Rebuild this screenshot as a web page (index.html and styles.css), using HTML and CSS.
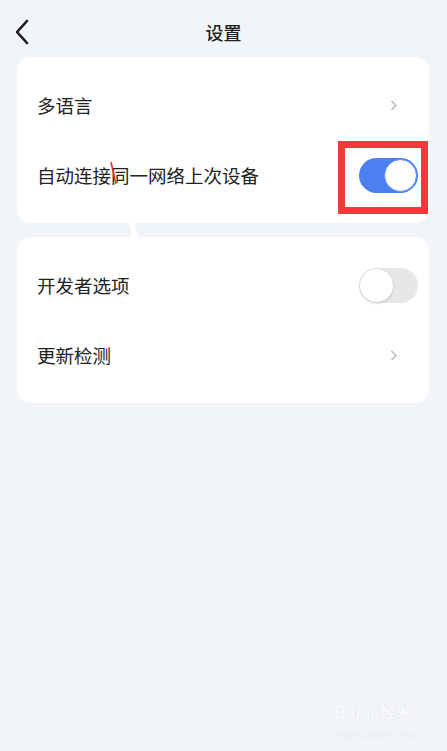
FILE: index.html
```html
<!DOCTYPE html>
<html lang="zh">
<head>
<meta charset="utf-8">
<link rel="stylesheet" href="styles.css">
</head>
<body>
<div class="page">
  <header class="header">
    <div class="back">
      <svg width="16" height="26" viewBox="0 0 16 26"><path d="M13 2 L3 13 L13 24" fill="none" stroke="#1a1a1a" stroke-width="2.6" stroke-linecap="round" stroke-linejoin="round"/></svg>
    </div>
    <div class="title">设置</div>
    <div></div>
  </header>

  <section class="card">
    <div class="row">
      <span class="label">多语言</span>
      <svg class="chev" width="8" height="11" viewBox="0 0 8 11"><path d="M1.5 1 L6 5.5 L1.5 10" fill="none" stroke="#b4b4b4" stroke-width="1.3"/></svg>
    </div>
    <div class="row">
      <span class="label">自动连接同一网络上次设备</span>
      <div class="toggle-wrap">
        <div class="toggle on"><span class="knob"></span></div>
        <div class="redbox"></div>
      </div>
    </div>
  </section>

  <section class="card">
    <div class="row">
      <span class="label">开发者选项</span>
      <div class="toggle-wrap">
        <div class="toggle off"><span class="knob"></span></div>
      </div>
    </div>
    <div class="row">
      <span class="label">更新检测</span>
      <svg class="chev" width="8" height="11" viewBox="0 0 8 11"><path d="M1.5 1 L6 5.5 L1.5 10" fill="none" stroke="#b4b4b4" stroke-width="1.3"/></svg>
    </div>
  </section>

  <svg class="mark" width="447" height="260" viewBox="0 0 447 260">
    <line x1="111" y1="162" x2="116" y2="184" stroke="#e8343a" stroke-width="1.6"/>
    <polygon points="121,188 125,188 139,238 132,238" fill="#ffffff"/>
  </svg>

  <div class="watermark">
    <div class="wm-top"><span>Bai</span><span class="paw">du</span><span>经验</span></div>
    <div class="wm-bottom">jingyan.baidu.com</div>
  </div>
</div>
</body>
</html>
```

FILE: styles.css
```css
* { box-sizing: border-box; }
html, body {
  margin: 0;
  padding: 0;
  background: #f1f4f8;
}
body {
  font-family: "Noto Sans CJK SC", "Noto Sans", sans-serif;
  color: #1f1f1f;
}
.page {
  position: relative;
  width: 447px;
  height: 751px;
  overflow: hidden;
}
.header {
  display: grid;
  grid-template-columns: 1fr auto 1fr;
  align-items: center;
  height: 50px;
  margin-top: 7px;
  padding: 0 14px;
}
.back {
  display: flex;
  align-items: center;
  margin-top: -1px;
}
.back svg { display: block; }
.title {
  font-size: 18px;
  font-weight: 500;
  line-height: 24px;
  color: #1f1f1f;
}
.card {
  margin: 0 18px 14px 17px;
  background: #ffffff;
  border-radius: 14px;
  padding: 14px 0 12px;
}
.row {
  display: flex;
  align-items: center;
  justify-content: space-between;
  height: 70px;
  padding: 0 11px 0 20px;
}
.label {
  font-size: 18.5px;
  line-height: 24px;
  color: #222222;
  margin-top: -2px;
}
.chev {
  display: block;
  margin-right: 20px;
  margin-top: -2px;
}
.toggle-wrap {
  position: relative;
  margin-top: -2px;
}
.toggle {
  position: relative;
  width: 59px;
  height: 35px;
  border-radius: 18px;
}
.toggle.on { background: #4d7ff0; }
.toggle.off { background: #e7e7e7; }
.knob {
  position: absolute;
  top: 1px;
  width: 33px;
  height: 33px;
  border-radius: 50%;
  background: #ffffff;
}
.toggle.on .knob {
  right: 1px;
  border: 1.5px solid #5a88f2;
}
.toggle.off .knob {
  left: 1px;
  box-shadow: 0 1px 3px rgba(0,0,0,0.18);
}
.redbox {
  position: absolute;
  left: -21px;
  top: -17px;
  width: 90px;
  height: 73px;
  border: 7px solid #f5393a;
}
.mark {
  position: absolute;
  left: 0;
  top: 0;
  pointer-events: none;
}
.watermark {
  position: absolute;
  left: 328px;
  top: 703px;
  width: 92px;
  text-align: center;
  color: #fafbfc;
  text-shadow: 0 0 1px #e0e3e7, 0 0 1px #e0e3e7;
  font-family: "Liberation Sans", sans-serif;
}
.wm-top {
  font-size: 17px;
  font-weight: 700;
  line-height: 20px;
  display: flex;
  justify-content: center;
  gap: 2px;
}
.paw { font-size: 13px; }
.wm-bottom {
  font-family: "Liberation Serif", serif;
  font-size: 11px;
  line-height: 14px;
  margin-top: 4px;
}
```
